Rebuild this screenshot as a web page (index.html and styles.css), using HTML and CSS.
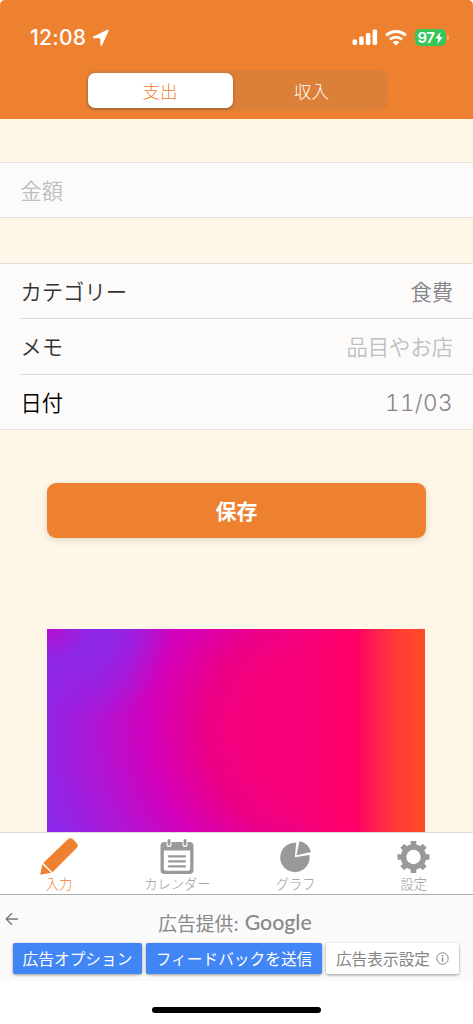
FILE: index.html
```html
<!DOCTYPE html>
<html lang="ja">
<head>
<meta charset="utf-8">
<title>入力</title>
<link rel="stylesheet" href="styles.css">
</head>
<body>
<div class="screen">
  <header class="header">
    <div class="status">
      <span class="time">12:08</span>
      <svg class="location" width="18" height="18" viewBox="0 0 18 18"><path d="M15.800 1.500 1.800 8.300h7.400l.1 7.600z" fill="#fff" stroke="#fff" stroke-width="1.800" stroke-linejoin="round"/></svg>
      <svg class="signal" width="26" height="17" viewBox="0 0 26 17" fill="#fff"><rect x="0.500" y="10.500" width="4.500" height="5.500" rx="1.400"/><rect x="7.200" y="7.500" width="4.500" height="8.500" rx="1.400"/><rect x="13.900" y="4" width="4.500" height="12" rx="1.400"/><rect x="20.600" y="0.500" width="4.500" height="15.500" rx="1.400"/></svg>
      <svg class="wifi" width="22" height="16" viewBox="0 0 22 16" fill="none" stroke="#fff"><path d="M1.200 5.500a14 14 0 0 1 19.600 0" stroke-width="3"/><path d="M5 9.600a8.700 8.700 0 0 1 12 0" stroke-width="2.800"/><path d="M11 15.600 7.700 12.300a4.800 4.800 0 0 1 6.600 0z" fill="#fff" stroke="none"/></svg>
      <span class="battery"><span>97</span><svg width="8" height="12" viewBox="0 0 8 12"><path d="M5.500 0 .3 6.500h2.900L2.300 12l5.400-7H4.700z" fill="#fff"/></svg></span>
      <span class="battery-cap"></span>
    </div>
    <div class="segments">
      <div class="segment selected">支出</div>
      <div class="segment">収入</div>
    </div>
  </header>
  <main class="content">
    <section class="group amount"><div class="row placeholder">金額</div></section>
    <section class="group details">
      <div class="row"><span>カテゴリー</span><span class="value">食費</span></div>
      <div class="row memo"><span>メモ</span><span class="placeholder">品目やお店</span></div>
      <div class="row date"><span>日付</span><span class="value digits">11/03</span></div>
    </section>
    <button class="save">保存</button>
    <div class="banner"></div>
  </main>
  <nav class="tabs">
    <div class="tab active">
      <svg width="40" height="38" viewBox="0 0 40 38" fill="currentColor"><path d="M4.300 25 28.600 1.500q2.800-2.600 5.600 0l3.200 3.200q2.600 2.800 0 5.600L13.500 34.200z"/><path d="M3.200 26.300 1.200 36.800l11-2z"/></svg>
      <span>入力</span>
    </div>
    <div class="tab">
      <svg width="40" height="38" viewBox="0 0 40 38"><path fill="currentColor" fill-rule="evenodd" d="M7.500 4h25q4 0 4 4v24q0 4-4 4h-25q-4 0-4-4V8q0-4 4-4zm-.7 8.500V30.700q0 2 2 2h22.400q2 0 2-2V12.500z"/><g stroke="#fff" stroke-width="5" stroke-linecap="round"><path d="M12 2v4.500M28 2v4.500"/></g><g stroke="currentColor" stroke-linecap="round"><path d="M12 2.600v3.400M28 2.600v3.400" stroke-width="3"/><path d="M12 18.300h16M12 23.300h16M12 28.300h16" stroke-width="2.200"/></g></svg>
      <span>カレンダー</span>
    </div>
    <div class="tab">
      <svg width="40" height="38" viewBox="0 0 40 38" fill="currentColor"><path d="M18.800 19.300 20.200 4.800A14.700 14.700 0 1 0 33.400 17z"/><path d="M20.600 17.200 23.400 3.300Q32.500 5 35 14.100z"/></svg>
      <span>グラフ</span>
    </div>
    <div class="tab">
      <svg width="40" height="38" viewBox="0 0 40 38" fill="none" stroke="currentColor"><g stroke-width="5.600"><path d="M19.500 3v6M19.500 29v6M3.500 19h6M29.500 19h6M8.300 7.800l4 4M26.700 26.200l4 4M30.700 7.800l-4 4M12.300 26.200l-4 4"/></g><circle cx="19.500" cy="19" r="10" stroke-width="5.600"/></svg>
      <span>設定</span>
    </div>
  </nav>
  <footer class="ad">
    <div class="ad-head">
      <svg class="back" width="14" height="14" viewBox="0 0 14 14" fill="none" stroke="#777" stroke-width="1.300"><path d="M13 7H1.500M7 1.200 1.200 7 7 12.800"/></svg>
      <div class="provider">広告提供: <span>Google</span></div>
    </div>
    <div class="ad-buttons">
      <div class="ad-button options">広告オプション</div>
      <div class="ad-button feedback">フィードバックを送信</div>
      <div class="ad-button settings">広告表示設定 <svg width="13" height="13" viewBox="0 0 13 13" fill="none" stroke="#858585"><circle cx="6.500" cy="6.500" r="5.700"/><path d="M6.500 5.400v4.300M6.500 3.100v1.300" stroke-width="1.400"/></svg></div>
    </div>
  </footer>
  <div class="home"><div class="indicator"></div></div>
</div>
</body>
</html>
```
FILE: styles.css
```css
* { box-sizing: border-box; }
body { margin: 0; background: #fff; font-family: "Noto Sans CJK JP", sans-serif; }
.screen { width: 473px; height: 1024px; display: flex; flex-direction: column; overflow: hidden; background: #fff; }
.header { height: 119px; flex: none; background: #ee8130; border-radius: 5px 5px 0 0; }
.status { height: 70px; display: flex; align-items: center; padding: 5px 24px 0 30px; }
.time { font: 500 21px/24px Inter, sans-serif; color: #fff; width: 58px; letter-spacing: .3px; white-space: nowrap; }
.location { margin-left: 4px; }
.signal { margin-left: auto; }
.wifi { margin-left: 7px; }
.battery { margin-left: 8px; width: 31px; height: 17px; border-radius: 5px; background: #35c759; color: #fff; display: flex; align-items: center; justify-content: center; gap: 1px; font: 600 15px/17px Inter, sans-serif; letter-spacing: -0.5px; }
.battery-cap { width: 2px; height: 5px; margin-left: 1px; border-radius: 0 2px 2px 0; background: #f6ae79; }
.segments { width: 302px; height: 41px; margin: 0 auto; padding: 3px 0 3px 2px; border-radius: 9px; background: #dc8039; display: flex; }
.segment { flex: 1; display: flex; align-items: center; justify-content: center; font-size: 17.500px; font-weight: 300; line-height: 20px; color: #fff; }
.segment:last-child { padding-left: 3px; }
.segment.selected { flex: 0 0 145px; background: #fff; color: #ee8130; border-radius: 7px; box-shadow: 0 1px 3px #0005; }
.content { height: 713px; flex: none; background: #fef7e7; overflow: hidden; padding-top: 43px; }
.group { background: #fcfbfa; border: solid #e1dfdc; border-width: 1px 0; }
.amount { height: 56px; margin-bottom: 45px; }
.row { height: 54px; margin-left: 20px; padding: 0 20px 0 .5px; display: flex; align-items: center; justify-content: space-between; font-size: 21.300px; line-height: 30px; font-weight: 350; color: #333; }
.row + .row { height: 55px; border-top: 1px solid #dedddd; }
.row.memo { height: 56px; padding-bottom: 1px; }
.row.date { color: #000; }
.row .value { color: #85858a; }
.row.placeholder, .row .placeholder { color: #bfbfc1; }
.row .digits { font: 300 22.500px/30px Inter, sans-serif; font-variant-numeric: tabular-nums; letter-spacing: .4px; padding-top: 1px; }
.save { display: block; width: 379px; height: 55px; margin: 53px auto 91px; padding: 0 0 2px; border: 0; border-radius: 9px; background: #ee8130; color: #fff; font: 700 21px/30px "Noto Sans CJK JP", sans-serif; box-shadow: 0 2px 7px #0002; }
.banner { width: 378px; height: 203px; margin-left: 47px; background:
  radial-gradient(ellipse 45px 32px at 0 0, #b510ce 0%, #b510ce00 100%),
  radial-gradient(ellipse 80px 90px at 42px 5px, #8c28e9 0%, #8c28e9cc 35%, #8c28e900 100%),
  linear-gradient(90deg, #ff006600 66%, #ff0066 82%, #ff2648 88%, #ff3b36 93%, #ff4c25 100%),
  radial-gradient(ellipse 350px 310px at 300px 100px, #f50078 0%, #f50078 28%, #ed0087 40%, #d400b9 56%, #b114d3 71%, #8c28e9 89%, #8c28e9 100%); }
.tabs { height: 63px; flex: none; border-top: 1px solid #ddd; border-bottom: 1px solid #aaa; display: grid; grid-template-columns: repeat(4, 1fr); background: #fff; }
.tab { display: flex; flex-direction: column; align-items: center; padding-top: 5px; color: #999; font-size: 13.300px; line-height: 16px; font-weight: 300; }
.tab.active { color: #ee8130; }
.ad { height: 86px; flex: none; background: #fafafa; padding: 13px 13px 0; }
.ad-head { height: 35px; display: flex; position: relative; justify-content: center; }
.back { position: absolute; left: -8px; top: 4px; }
.provider { color: #898989; font-size: 18.800px; line-height: 30px; display: flex; gap: 6px; margin-right: 3px; }
.provider span { font-family: Lato, sans-serif; font-size: 21.300px; font-weight: 500; line-height: 29px; }
.ad-buttons { display: flex; gap: 4px; }
.ad-button { height: 31px; display: flex; align-items: center; justify-content: center; border-radius: 2px; background: #4285f4; color: #fff; font-size: 15.700px; line-height: 20px; box-shadow: 0 1px 3px #0006; white-space: nowrap; }
.options { width: 129px; }
.feedback { width: 176px; }
.settings { width: 133px; background: #fff; color: #858585; gap: 6px; }
.home { flex: 1; display: flex; justify-content: center; padding-top: 26px; }
.indicator { width: 169px; height: 6px; border-radius: 3px; background: #000; }
```
